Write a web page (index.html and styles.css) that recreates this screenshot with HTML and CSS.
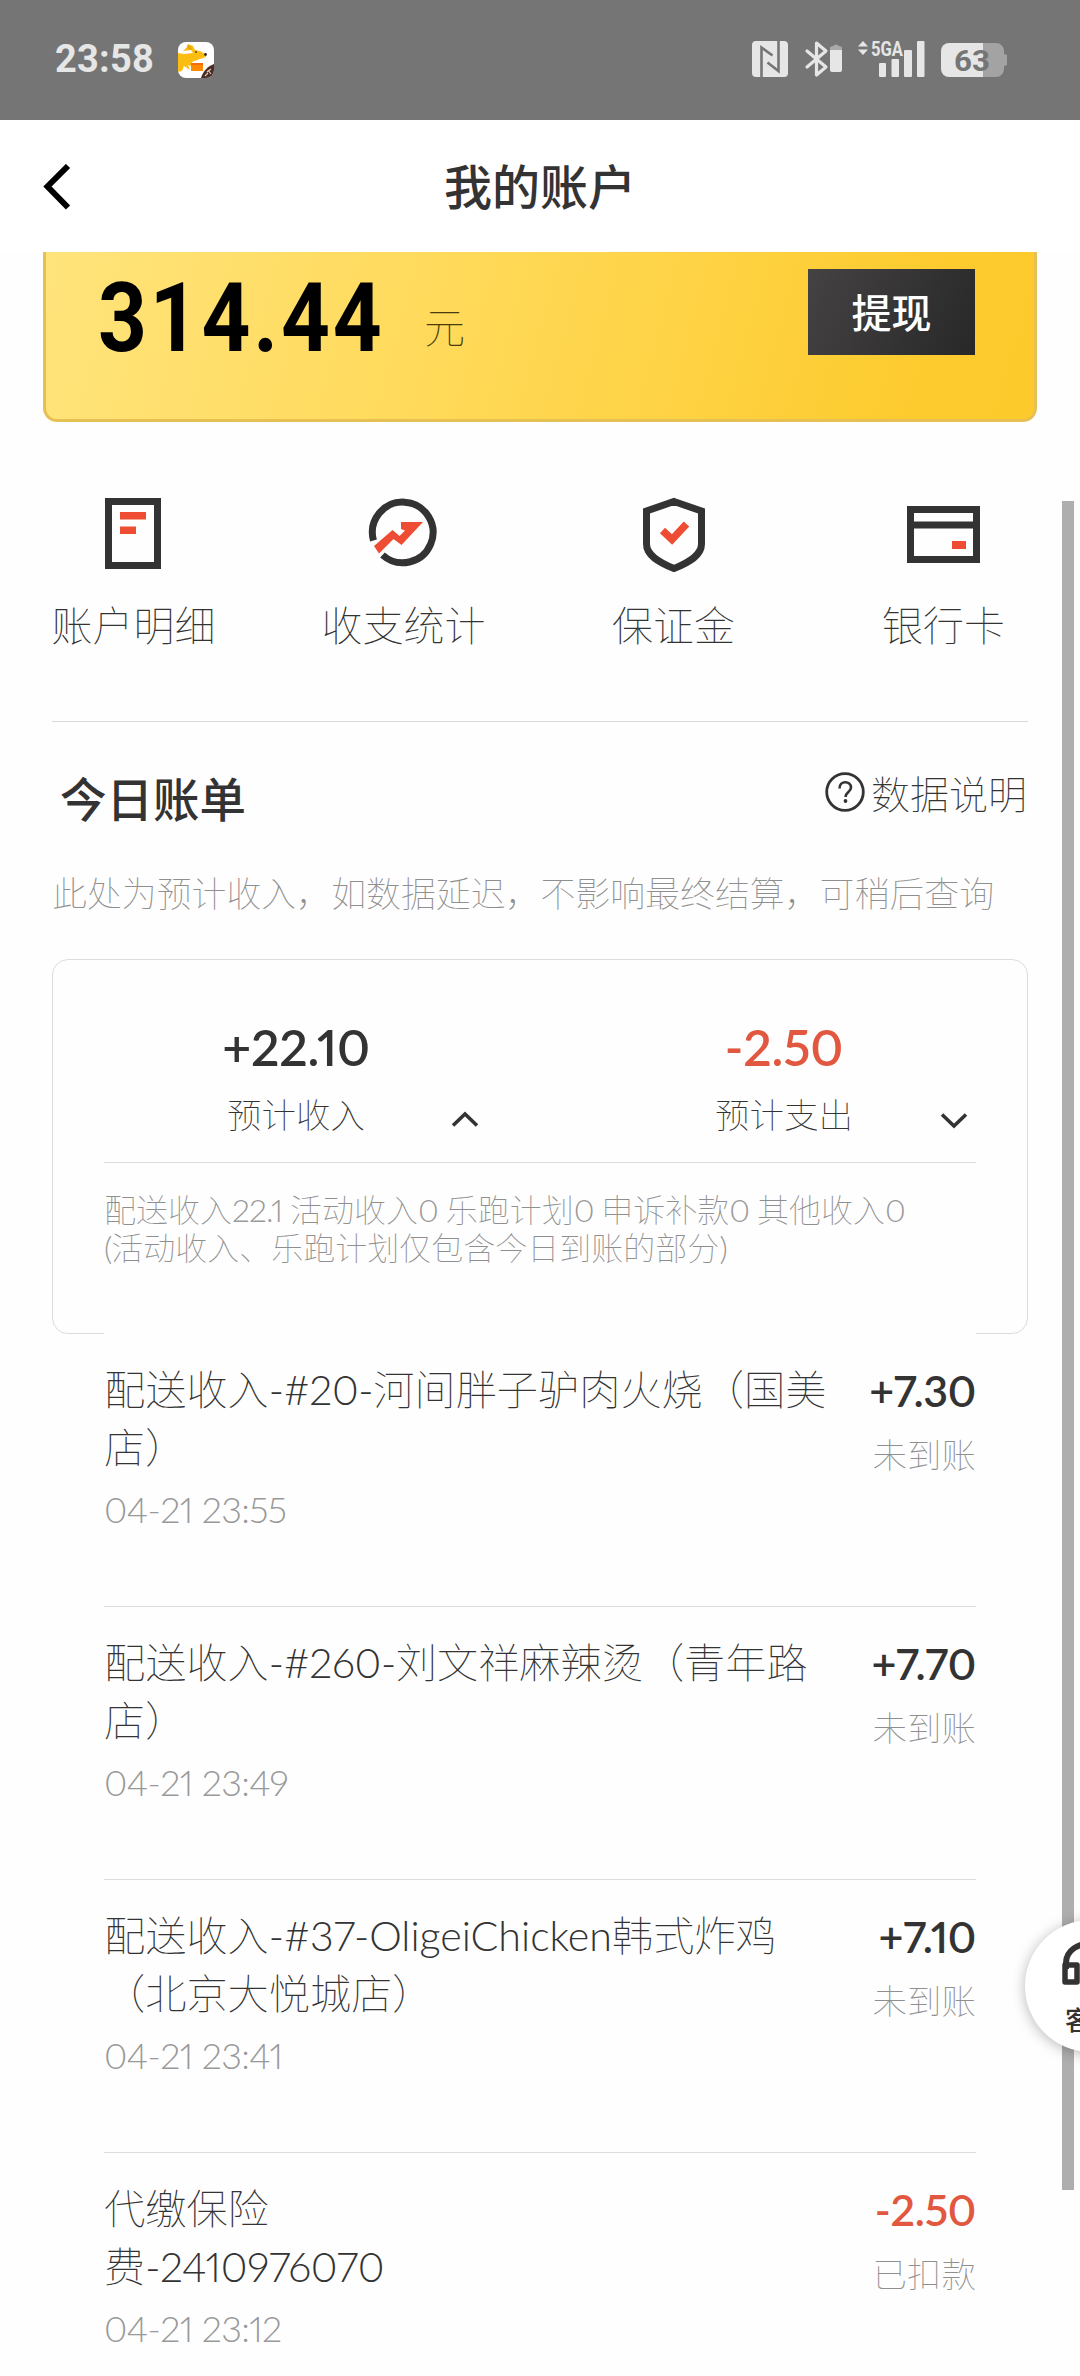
FILE: index.html
```html
<!DOCTYPE html>
<html lang="zh-CN">
<head>
<meta charset="utf-8">
<title>我的账户</title>
<link rel="stylesheet" href="styles.css">
</head>
<body>
<div class="phone">
  <div class="status">
    <span class="time">23:58</span>
    <svg class="app" width="36" height="36" viewBox="0 0 36 36">
      <defs><clipPath id="appclip"><rect width="36" height="36" rx="8"/></clipPath></defs>
      <g clip-path="url(#appclip)">
        <rect width="36" height="36" fill="#fff"/>
        <path d="M0 11 L6 12 L15 11 L13 8 L5 9 L9 5 L10 2 L15 4 L17 8 L22 9 L27 12 L28 15 L22 17 L19 18 L14 20 L13 24 L10 23 L12 28 L6 24 L4 29 L0 30Z" fill="#fbbd12"/>
        <path d="M9 3l4 1 1 4-4-1z" fill="#e9a50a"/>
        <circle cx="18" cy="10" r="1" fill="#5b3a1d"/><circle cx="27.500" cy="12.500" r="1.400" fill="#3b251a"/>
        <rect x="13" y="21" width="12" height="8" fill="#ff8a00"/><path d="M13 21h12v2H13z" fill="#f36c0c"/>
        <path d="M36 22V36H23C25 29 30 24 36 22Z" fill="#4b2c23"/>
        <path d="M29 30l4-3M27 34l3-3M30 28l3 4" stroke="#d9c6b8" stroke-width="1.200"/>
      </g>
    </svg>
    <svg class="indicators" width="260" height="60" viewBox="750 29 260 60">
      <g fill="#e6e6e6">
        <rect x="752" y="41" width="36" height="36" rx="4"/>
        <g fill="none" stroke="#757575" stroke-width="2.600">
          <path d="M761.500 77V47.500L772.500 55.500M778.500 41V71L767.500 62.500"/>
        </g>
        <path d="M807 51L826 67L816.500 75V43L826 51L807 67" fill="none" stroke="#e6e6e6" stroke-width="3.200" stroke-linejoin="round" stroke-linecap="round"/>
        <path d="M830 50h12v20a2 2 0 0 1-2 2h-8a2 2 0 0 1-2-2z"/>
        <path d="M830 50v-3l3-1q3-3 6 0l3 1v3z" fill="#a9a9a9"/>
        <path d="M858 46.500l5-5.500 5 5.500zM858 49.500h10l-5 5.500z"/>
        <rect x="879" y="63" width="7" height="14" rx="1"/><rect x="891.500" y="59" width="7.500" height="18" rx="1"/><rect x="904" y="50" width="8" height="27" rx="1"/><rect x="917" y="41" width="7.500" height="36" rx="1"/>
        <path d="M949 43H996a8 8 0 0 1 8 8v3l3 1v10l-3 1v3a8 8 0 0 1-8 8H949z" fill="#a3a3a3"/>
        <path d="M949 43H983V77H949a8 8 0 0 1-8-8V51a8 8 0 0 1 8-8z"/>
      </g>
      <text x="871" y="56" class="net" textLength="32" lengthAdjust="spacingAndGlyphs">5GA</text>
      <text x="954" y="71" class="batt" textLength="36" lengthAdjust="spacingAndGlyphs">63</text>
    </svg>
  </div>

  <div class="navbar">
    <svg class="back" width="28" height="46" viewBox="0 0 28 46"><path d="M25 2L4.500 22.500L25 43.500" fill="none" stroke="#000" stroke-width="6"/></svg>
    <h1 class="title">我的账户</h1>
  </div>

  <div class="balance">
    <span class="sum">314.44</span>
    <span class="unit">元</span>
    <span class="withdraw">提现</span>
  </div>

  <div class="shortcuts">
    <div class="shortcut">
      <svg width="76" height="76" viewBox="0 0 76 76"><rect x="12.500" y="5.500" width="49" height="64" fill="none" stroke="#333" stroke-width="7"/><path d="M24 16h26v7.500H24zM24 30.500h16V38H24z" fill="#ee4c33"/></svg>
      <span>账户明细</span>
    </div>
    <div class="shortcut">
      <svg width="76" height="76" viewBox="0 0 76 76"><path d="M7.500 44.500A30.300 30.300 0 1 1 16.500 59" fill="none" stroke="#333" stroke-width="7"/><path d="M8 50L26.500 34L33.500 40L39 34.500L35 33V26H57L35.500 49L27.500 43L13 57.500Z" fill="#ee4c33"/></svg>
      <span>收支统计</span>
    </div>
    <div class="shortcut">
      <svg width="76" height="76" viewBox="0 0 76 76"><path d="M38 5.500L65.500 15V48C65.500 59 54 66 38 72.500C22 66 10.500 59 10.500 48V15Z" fill="none" stroke="#333" stroke-width="7"/><path d="M26.500 34.500L36 43.500L50.500 28" fill="none" stroke="#ee4c33" stroke-width="7.500"/></svg>
      <span>保证金</span>
    </div>
    <div class="shortcut">
      <svg width="76" height="76" viewBox="0 0 76 76"><path d="M4.500 13.500H70.500V63.500H4.500ZM4.500 29H70.500" fill="none" stroke="#333" stroke-width="7"/><rect x="46" y="45" width="14" height="8" fill="#ee4c33"/></svg>
      <span>银行卡</span>
    </div>
  </div>

  <div class="section-head">
    <h2 class="section-title">今日账单</h2>
    <span class="help"><svg width="42" height="42" viewBox="0 0 42 42"><circle cx="21" cy="21" r="18.300" fill="none" stroke="#333" stroke-width="2.800"/><path d="M15.500 17.500C15.500 9 27 9.500 27 16.500C27 21 21.500 21 21.500 26" fill="none" stroke="#333" stroke-width="2.600"/><circle cx="21.500" cy="30" r="1.900" fill="#333"/></svg>数据说明</span>
  </div>
  <p class="note">此处为预计收入，如数据延迟，不影响最终结算，可稍后查询</p>

  <div class="summary">
    <div class="totals">
      <div class="total">
        <b>+22.10</b><span>预计收入</span>
        <svg class="caret caret-up" width="28" height="18" viewBox="0 0 28 18"><path d="M2 15.500L14 4L26 15.500" fill="none" stroke="#333" stroke-width="3.600"/></svg>
      </div>
      <div class="total">
        <b class="red">-2.50</b><span>预计支出</span>
        <svg class="caret caret-down" width="28" height="18" viewBox="0 0 28 18"><path d="M2 2.500L14 14L26 2.500" fill="none" stroke="#333" stroke-width="3.600"/></svg>
      </div>
    </div>
    <p class="detail">配送收入<i>22.1 </i>活动收入<i>0 </i>乐跑计划<i>0 </i>申诉补款<i>0 </i>其他收入<i>0</i><br><i>(</i>活动收入、乐跑计划仅包含今日到账的部分<i>)</i></p>
  </div>

  <div class="list">
    <div class="row">
      <div class="info"><div class="name">配送收入<i class="order">-#20-</i>河间胖子驴肉火烧（国美<br>店）</div><div class="date">04-21 23:55</div></div>
      <div class="value"><b>+7.30</b><span>未到账</span></div>
    </div>
    <div class="row">
      <div class="info"><div class="name">配送收入<i class="order">-#260-</i>刘文祥麻辣烫（青年路<br>店）</div><div class="date">04-21 23:49</div></div>
      <div class="value"><b>+7.70</b><span>未到账</span></div>
    </div>
    <div class="row">
      <div class="info"><div class="name">配送收入<i>-#37-OligeiChicken</i>韩式炸鸡<br>（北京大悦城店）</div><div class="date">04-21 23:41</div></div>
      <div class="value"><b>+7.10</b><span>未到账</span></div>
    </div>
    <div class="row">
      <div class="info"><div class="name">代缴保险<br>费<i class="order">-2410976070</i></div><div class="date">04-21 23:12</div></div>
      <div class="value"><b class="red">-2.50</b><span>已扣款</span></div>
    </div>
  </div>

  <div class="scrollbar"></div>
  <div class="service">
    <svg width="60" height="46" viewBox="0 0 60 46"><path d="M5 28V22C5 -4 55 -4 55 22V28" fill="none" stroke="#333" stroke-width="6"/><path d="M4 24H16V41H4ZM44 24H56V41H44Z" fill="none" stroke="#333" stroke-width="5.500" stroke-linejoin="round"/></svg>
    <span>客服</span>
  </div>
</div>
</body>
</html>
```
FILE: styles.css
```css
* { box-sizing: border-box; margin: 0; padding: 0; }
body { background: #fefefe; }
svg { display: block; flex: none; }
i { font-style: normal; font-weight: 300; }
.phone {
  position: relative;
  width: 1080px;
  height: 2376px;
  overflow: hidden;
  background: #fefefe;
  color: #333;
  font-family: Lato, "Noto Sans CJK SC", sans-serif;
  font-weight: 100;
  font-variant-numeric: proportional-nums;
  white-space: nowrap;
  text-spacing-trim: space-all;
}

.status { display: flex; align-items: center; height: 120px; padding: 0 70px 2px 55px; background: #757575; }
.time { width: 123px; font: 700 38px/44px Roboto, sans-serif; letter-spacing: 0.2px; color: #e6e6e6; }
.app { margin-top: 2px; }
.indicators { margin: 0 0 0 auto; }
.net { font: 700 20px Roboto, sans-serif; fill: #e6e6e6; }
.batt { font: 700 30px Roboto, sans-serif; fill: #757575; }

.navbar { display: flex; align-items: center; height: 132px; padding: 2px 43px 0; background: #fff; }
.title { flex: 1; margin-right: 28px; text-align: center; font-size: 48px; line-height: 60px; font-weight: 500; }

.balance {
  display: flex;
  align-items: flex-start;
  height: 170px;
  margin: 0 43px;
  padding: 17px 59px 0 52px;
  border: 3px solid #e6c052;
  border-top: 0;
  border-radius: 0 0 14px 14px;
  background: linear-gradient(105deg, #ffe47c 0%, #ffd958 42%, #fdcb2e 88%, #fdca2c 100%);
}
.sum { width: 326px; font: 700 97px/98px Roboto, sans-serif; letter-spacing: 3.2px; color: #000; transform: scaleX(.88); transform-origin: 0 50%; }
.unit { padding-top: 29px; font-size: 41px; line-height: 60px; color: #4a3a10; }
.withdraw { width: 167px; height: 86px; margin-left: auto; background: linear-gradient(115deg, #454243, #282828); color: #fff; font-size: 40px; font-weight: 500; line-height: 88px; text-align: center; }

.shortcuts { display: grid; grid-template-columns: repeat(4, 270px); height: 299px; margin-left: -1.500px; padding-top: 74px; }
.shortcut { display: flex; flex-direction: column; align-items: center; gap: 24px; font-size: 41px; line-height: 60px; }

.section-head { display: flex; justify-content: space-between; align-items: center; height: 155px; margin: 0 52px; padding: 0 1px 0 8px; border-top: 1px solid #d8d8d8; }
.section-title { font-size: 46.500px; line-height: 60px; font-weight: 500; }
.help { display: flex; align-items: center; gap: 5px; margin-top: -10px; font-size: 39px; line-height: 50px; }
.help svg { margin-top: -4px; }
.note { height: 83px; padding-left: 52px; font-size: 34.900px; line-height: 35px; color: #8f8f8f; }

.summary { height: 375px; margin: 0 52px; padding: 0 51px; border: 1px solid #dcdcdc; border-radius: 16px; }
.totals { display: flex; height: 203px; padding-top: 55px; border-bottom: 1px solid #dcdcdc; }
.total { position: relative; width: 488px; padding-right: 104px; display: flex; flex-direction: column; align-items: center; }
.total b { font-size: 50px; line-height: 64px; font-weight: 600; letter-spacing: -0.2px; }
.total span { margin-top: 6px; font-size: 34.500px; line-height: 60px; }
.total + .total { width: 384px; padding: 0; }
.caret { position: absolute; top: 95px; left: 347px; }
.caret-down { left: 348px; top: 97px; }
.red { color: #e1573f; }
.detail { padding-top: 28px; font-size: 32px; line-height: 38px; color: #8f8f8f; }
.detail i { letter-spacing: -0.9px; color: #999; }

.list { position: relative; margin: -2px 104px 0; padding-top: 2px; background: #fefefe; }
.row { display: flex; justify-content: space-between; height: 273px; padding-top: 28px; border-bottom: 1px solid #dcdcdc; }
.name { margin-top: -2px; font-size: 41.200px; line-height: 58px; }
.order { letter-spacing: -0.350px; }
.date { margin-top: 5px; font-size: 36px; line-height: 56px; font-weight: 300; color: #999; letter-spacing: -0.650px; }
.value { display: flex; flex-direction: column; align-items: flex-end; }
.value b { font-size: 43px; line-height: 58px; font-weight: 600; letter-spacing: -0.3px; }
.value span { margin-top: 5px; font-size: 34.500px; line-height: 60px; color: #8f8f8f; }

.scrollbar { position: absolute; left: 1062px; top: 501px; width: 12px; height: 1689px; background: #aeaeae; }
.service {
  position: absolute;
  left: 1025px;
  top: 1920px;
  width: 132px;
  height: 132px;
  padding-top: 21px;
  border-radius: 50%;
  background: #fff;
  box-shadow: 0 2px 14px rgba(0, 0, 0, .28);
  display: flex;
  flex-direction: column;
  align-items: center;
  font-size: 26px;
  line-height: 66px;
  font-weight: 500;
}
```
